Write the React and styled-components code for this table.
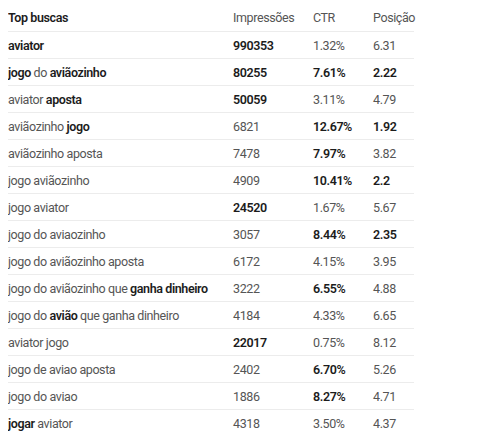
import React from "react";
import styled, { createGlobalStyle } from "styled-components";

const Global = createGlobalStyle`
  body { margin: 8px; background: #fff; font-family: Roboto, "Liberation Sans", sans-serif; }
`;

const Table = styled.div`
  width: 406px;
  display: grid;
  grid-template-columns: 225px 80px 60px 41px;
  font-size: 12.5px;
  letter-spacing: -0.4px;
  color: #555;
`;

const Cell = styled.div`
  height: ${(p) => (p.$head ? "21px" : "26px")};
  display: flex;
  align-items: ${(p) => (p.$head ? "flex-start" : "center")};
  padding-top: ${(p) => (p.$head ? "2px" : "0")};
  box-sizing: content-box;
  border-bottom: 1px solid #ececec;
  white-space: nowrap;
  font-weight: ${(p) => (p.$bold ? 600 : 400)};
  color: ${(p) => (p.$bold ? "#1c1c1c" : "#555")};
`;

const Query = styled.span`
  white-space: pre;
`;

const B = styled.b`
  font-weight: 600;
  color: #1c1c1c;
`;

const rows = [
  [[["aviator", 1]], "990353", 1, "1.32%", 0, "6.31", 0],
  [[["jogo", 1], [" do "], ["aviãozinho", 1]], "80255", 1, "7.61%", 1, "2.22", 1],
  [[["aviator "], ["aposta", 1]], "50059", 1, "3.11%", 0, "4.79", 0],
  [[["aviãozinho "], ["jogo", 1]], "6821", 0, "12.67%", 1, "1.92", 1],
  [[["aviãozinho aposta"]], "7478", 0, "7.97%", 1, "3.82", 0],
  [[["jogo aviãozinho"]], "4909", 0, "10.41%", 1, "2.2", 1],
  [[["jogo aviator"]], "24520", 1, "1.67%", 0, "5.67", 0],
  [[["jogo do aviaozinho"]], "3057", 0, "8.44%", 1, "2.35", 1],
  [[["jogo do aviãozinho aposta"]], "6172", 0, "4.15%", 0, "3.95", 0],
  [[["jogo do aviãozinho que "], ["ganha dinheiro", 1]], "3222", 0, "6.55%", 1, "4.88", 0],
  [[["jogo do "], ["avião", 1], [" que ganha dinheiro"]], "4184", 0, "4.33%", 0, "6.65", 0],
  [[["aviator jogo"]], "22017", 1, "0.75%", 0, "8.12", 0],
  [[["jogo de aviao aposta"]], "2402", 0, "6.70%", 1, "5.26", 0],
  [[["jogo do aviao"]], "1886", 0, "8.27%", 1, "4.71", 0],
  [[["jogar", 1], [" aviator"]], "4318", 0, "3.50%", 0, "4.37", 0],
];

export default function App() {
  return (
    <>
      <Global />
      <Table>
        <Cell $head $bold>Top buscas</Cell>
        <Cell $head>Impressões</Cell>
        <Cell $head>CTR</Cell>
        <Cell $head>Posição</Cell>
        {rows.map((r, i) => (
          <React.Fragment key={i}>
            <Cell>
              <Query>
                {r[0].map(([t, b], j) => (b ? <B key={j}>{t}</B> : <span key={j}>{t}</span>))}
              </Query>
            </Cell>
            <Cell $bold={!!r[2]}>{r[1]}</Cell>
            <Cell $bold={!!r[4]}>{r[3]}</Cell>
            <Cell $bold={!!r[6]}>{r[5]}</Cell>
          </React.Fragment>
        ))}
      </Table>
    </>
  );
}
